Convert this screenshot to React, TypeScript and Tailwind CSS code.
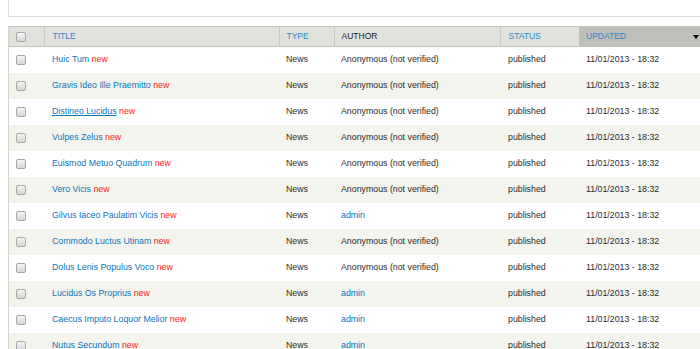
import React from 'react'

type Fila = { titulo: string; autor: string; subrayado?: boolean }

const filas: Fila[] = [
  { titulo: 'Huic Tum', autor: 'Anonymous (not verified)' },
  { titulo: 'Gravis Ideo Ille Praemitto', autor: 'Anonymous (not verified)' },
  { titulo: 'Distineo Lucidus', autor: 'Anonymous (not verified)', subrayado: true },
  { titulo: 'Vulpes Zelus', autor: 'Anonymous (not verified)' },
  { titulo: 'Euismod Metuo Quadrum', autor: 'Anonymous (not verified)' },
  { titulo: 'Vero Vicis', autor: 'Anonymous (not verified)' },
  { titulo: 'Gilvus Iaceo Paulatim Vicis', autor: 'admin' },
  { titulo: 'Commodo Luctus Utinam', autor: 'Anonymous (not verified)' },
  { titulo: 'Dolus Lenis Populus Voco', autor: 'Anonymous (not verified)' },
  { titulo: 'Lucidus Os Proprius', autor: 'admin' },
  { titulo: 'Caecus Imputo Loquor Melior', autor: 'admin' },
  { titulo: 'Nutus Secundum', autor: 'admin' },
]

function Casilla() {
  return (
    <span className="block w-[10px] h-[10px] rounded-[2px] border border-[#a9a9a9] bg-gradient-to-b from-[#f4f4f4] to-[#d6d6d6]" />
  )
}

export default function App() {
  return (
    <div className="w-[700px] h-[349px] overflow-hidden bg-white text-[#2b2b2b] font-['Liberation_Sans',Arial,sans-serif]">
      <div className="ml-[8px] h-[17px] border-l border-b border-[#dcdcdc] bg-white" />
      <div className="ml-[8px] mt-[9px] w-[700px] border-l border-[#d4d4d0]">
        <table className="table-fixed w-[700px] border-collapse text-[8.8px]">
          <colgroup>
            <col className="w-[35px]" />
            <col className="w-[235px]" />
            <col className="w-[55px]" />
            <col className="w-[166px]" />
            <col className="w-[79px]" />
            <col />
          </colgroup>
          <thead>
            <tr className="h-[20px] bg-[#e1e2dc] border-t border-b border-[#c3c4be] text-[8.5px] uppercase">
              <th className="px-0 border-r border-[#c9cac4]">
                <div className="flex pl-[7px]"><Casilla /></div>
              </th>
              <th className="text-left font-normal pl-[8px] text-[#2a88cc] border-r border-[#c9cac4]">Title</th>
              <th className="text-left font-normal pl-[7px] text-[#2a88cc] border-r border-[#c9cac4]">Type</th>
              <th className="text-left font-normal pl-[7px] text-[#222] border-r border-[#c9cac4]">Author</th>
              <th className="text-left font-normal pl-[8px] text-[#2a88cc]">Status</th>
              <th className="text-left font-normal pl-[7px] text-[#2a88cc] bg-[#bebfb9]">
                <div className="flex items-center justify-between pr-[10px]">
                  <span>Updated</span>
                  <span className="w-0 h-0 border-l-[3px] border-r-[3px] border-t-[4px] border-l-transparent border-r-transparent border-t-black" />
                </div>
              </th>
            </tr>
          </thead>
          <tbody>
            {filas.map((f, i) => (
              <tr key={i} className={`h-[26px] ${i % 2 === 0 ? 'bg-white' : 'bg-[#f3f4ee]'}`}>
                <td>
                  <div className="flex pl-[7px]"><Casilla /></div>
                </td>
                <td className="pl-[8px] whitespace-nowrap">
                  <a className={`text-[#0a74bc] ${f.subrayado ? 'underline' : ''}`}>{f.titulo}</a>{' '}
                  <span className="text-[#ff2020]">new</span>
                </td>
                <td className="pl-[7px]">News</td>
                <td className="pl-[7px] whitespace-nowrap">
                  {f.autor === 'admin' ? <a className="text-[#0a74bc]">admin</a> : f.autor}
                </td>
                <td className="pl-[8px]">published</td>
                <td className="pl-[7px]">11/01/2013 - 18:32</td>
              </tr>
            ))}
          </tbody>
        </table>
      </div>
    </div>
  )
}
